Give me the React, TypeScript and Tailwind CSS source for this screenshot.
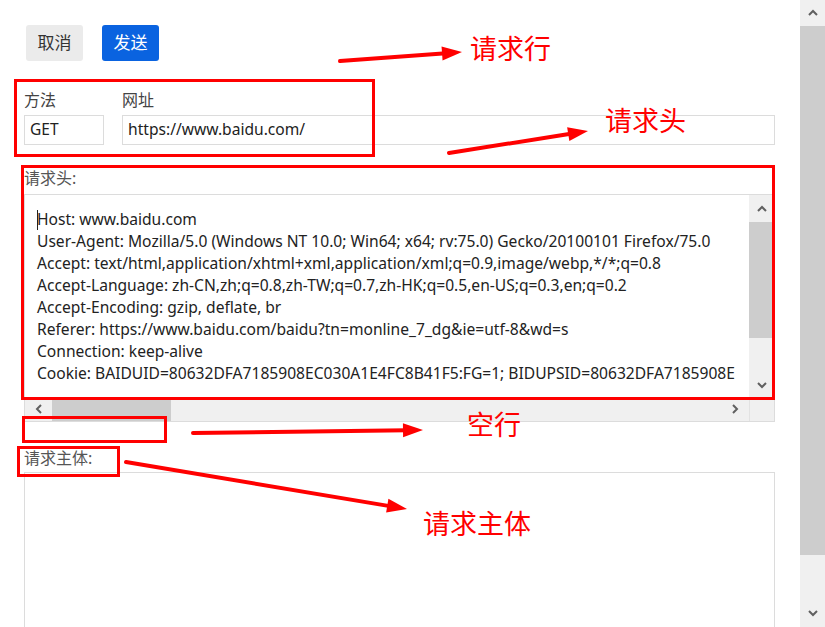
const headerLines = [
  "Host: www.baidu.com",
  "User-Agent: Mozilla/5.0 (Windows NT 10.0; Win64; x64; rv:75.0) Gecko/20100101 Firefox/75.0",
  "Accept: text/html,application/xhtml+xml,application/xml;q=0.9,image/webp,*/*;q=0.8",
  "Accept-Language: zh-CN,zh;q=0.8,zh-TW;q=0.7,zh-HK;q=0.5,en-US;q=0.3,en;q=0.2",
  "Accept-Encoding: gzip, deflate, br",
  "Referer: https://www.baidu.com/baidu?tn=monline_7_dg&ie=utf-8&wd=s",
  "Connection: keep-alive",
  "Cookie: BAIDUID=80632DFA7185908EC030A1E4FC8B41F5:FG=1; BIDUPSID=80632DFA7185908E",
]

const font = "font-['Noto_Sans','Noto_Sans_CJK_SC',sans-serif]"

// chevrons used by the fake scrollbars
const Chevron = ({ dir }: { dir: "up" | "down" | "left" | "right" }) => {
  const d = {
    up: "M2 8 L6 4 L10 8",
    down: "M2 4 L6 8 L10 4",
    left: "M8 2 L4 6 L8 10",
    right: "M4 2 L8 6 L4 10",
  }[dir]
  return (
    <svg width="12" height="12" viewBox="0 0 12 12">
      <path d={d} fill="none" stroke="#606060" strokeWidth="2" />
    </svg>
  )
}

function arrowHead(x1: number, y1: number, x2: number, y2: number) {
  const len = Math.hypot(x2 - x1, y2 - y1)
  const ux = (x2 - x1) / len
  const uy = (y2 - y1) / len
  const bx = x2 - ux * 20
  const by = y2 - uy * 20
  return `${x2},${y2} ${bx - uy * 7},${by + ux * 7} ${bx + uy * 7},${by - ux * 7}`
}

const arrows = [
  [340, 61, 462, 52],
  [449, 153, 588, 131],
  [193, 433, 423, 430],
  [126, 462, 407, 509],
]

const Annotations = () => (
  <div className="pointer-events-none absolute inset-0">
    <svg className="absolute inset-0" width="825" height="627">
      {arrows.map(([x1, y1, x2, y2], i) => {
        const len = Math.hypot(x2 - x1, y2 - y1)
        const ex = x2 - ((x2 - x1) / len) * 16
        const ey = y2 - ((y2 - y1) / len) * 16
        return (
          <g key={i}>
            <line x1={x1} y1={y1} x2={ex} y2={ey} stroke="#ff0000" strokeWidth="4" strokeLinecap="round" />
            <polygon points={arrowHead(x1, y1, x2, y2)} fill="#ff0000" />
          </g>
        )
      })}
    </svg>
    <div className="absolute left-[14px] top-[79px] h-[78px] w-[361px] border-[3px] border-[#ff0000]" />
    <div className="absolute left-[21px] top-[165px] h-[235px] w-[754px] border-[3px] border-[#ff0000]" />
    <div className="absolute left-[22px] top-[416px] h-[27px] w-[145px] border-[3px] border-[#ff0000]" />
    <div className="absolute left-[17px] top-[446px] h-[31px] w-[103px] border-[3px] border-[#ff0000]" />
    <div className={`absolute left-[470px] top-[35px] text-[27px] leading-[28px] text-[#ff0000] ${font}`}>请求行</div>
    <div className={`absolute left-[605px] top-[107px] text-[27px] leading-[28px] text-[#ff0000] ${font}`}>请求头</div>
    <div className={`absolute left-[467px] top-[411px] text-[27px] leading-[28px] text-[#ff0000] ${font}`}>空行</div>
    <div className={`absolute left-[423px] top-[510px] text-[27px] leading-[28px] text-[#ff0000] ${font}`}>请求主体</div>
  </div>
)

export default function App() {
  return (
    <div className={`relative flex h-[627px] w-[825px] overflow-hidden bg-white ${font}`}>
      <div className="flex w-[800px] flex-col pl-[24px] pr-[25px] pt-[25px]">
        {/* buttons */}
        <div className="ml-[2px] flex shrink-0 gap-[19px]">
          <button className="h-[36px] w-[57px] rounded-[3px] bg-[#ebebeb] text-[17px] text-[#333]">取消</button>
          <button className="h-[36px] w-[57px] rounded-[3px] bg-[#0a63e0] text-[17px] text-white">发送</button>
        </div>

        {/* request line */}
        <div className="mt-[29px] flex shrink-0 gap-[18px]">
          <div className="flex w-[80px] flex-col gap-[5px]">
            <span className="text-[16px] leading-[20px] text-[#444]">方法</span>
            <div className="flex h-[30px] items-center border border-[#dcdcdc] px-[5px] text-[15.5px] text-[#222]">GET</div>
          </div>
          <div className="flex flex-1 flex-col gap-[5px]">
            <span className="text-[16px] leading-[20px] text-[#444]">网址</span>
            <div className="flex h-[30px] items-center border border-[#dcdcdc] px-[5px] text-[15.6px] text-[#222]">
              https://www.baidu.com/
            </div>
          </div>
        </div>

        {/* headers */}
        <span className="mt-[23px] shrink-0 text-[16px] leading-[20px] text-[#555]">请求头:</span>
        <div className="mt-[6px] flex h-[228px] shrink-0 flex-col border border-[#dcdcdc]">
          <div className="flex min-h-0 flex-1">
            <div className="relative flex-1 overflow-hidden whitespace-pre pl-[12px] pt-[13px] text-[15.6px] leading-[22px] text-[#222]">
              <span className="absolute left-[12px] top-[15px] h-[20px] w-px bg-[#222]" />
              {headerLines.map((l) => (
                <div key={l}>{l}</div>
              ))}
            </div>
            <div className="flex w-[25px] flex-col bg-[#f0f0f0]">
              <div className="flex h-[27px] items-center justify-center">
                <Chevron dir="up" />
              </div>
              <div className="h-[116px] bg-[#cdcdcd]" />
              <div className="flex flex-1 items-end justify-center pb-[6px]">
                <Chevron dir="down" />
              </div>
            </div>
          </div>
          <div className="flex h-[24px] shrink-0 bg-[#f0f0f0]">
            <div className="flex w-[27px] items-center justify-center">
              <Chevron dir="left" />
            </div>
            <div className="w-[119px] bg-[#cdcdcd]" />
            <div className="flex flex-1 items-center justify-end pr-[8px]">
              <Chevron dir="right" />
            </div>
            <div className="w-[25px] border-l border-[#e2e2e2]" />
          </div>
        </div>

        {/* body */}
        <span className="mt-[26px] shrink-0 text-[16px] leading-[20px] text-[#555]">请求主体:</span>
        <div className="mt-[4px] h-[300px] shrink-0 border border-[#dcdcdc]" />
      </div>

      {/* page scrollbar */}
      <div className="flex w-[25px] flex-col bg-[#f0f0f0]">
        <div className="flex h-[26px] items-center justify-center">
          <Chevron dir="up" />
        </div>
        <div className="h-[529px] bg-[#cdcdcd]" />
        <div className="flex flex-1 items-end justify-center pb-[8px]">
          <Chevron dir="down" />
        </div>
      </div>

      <Annotations />
    </div>
  )
}
